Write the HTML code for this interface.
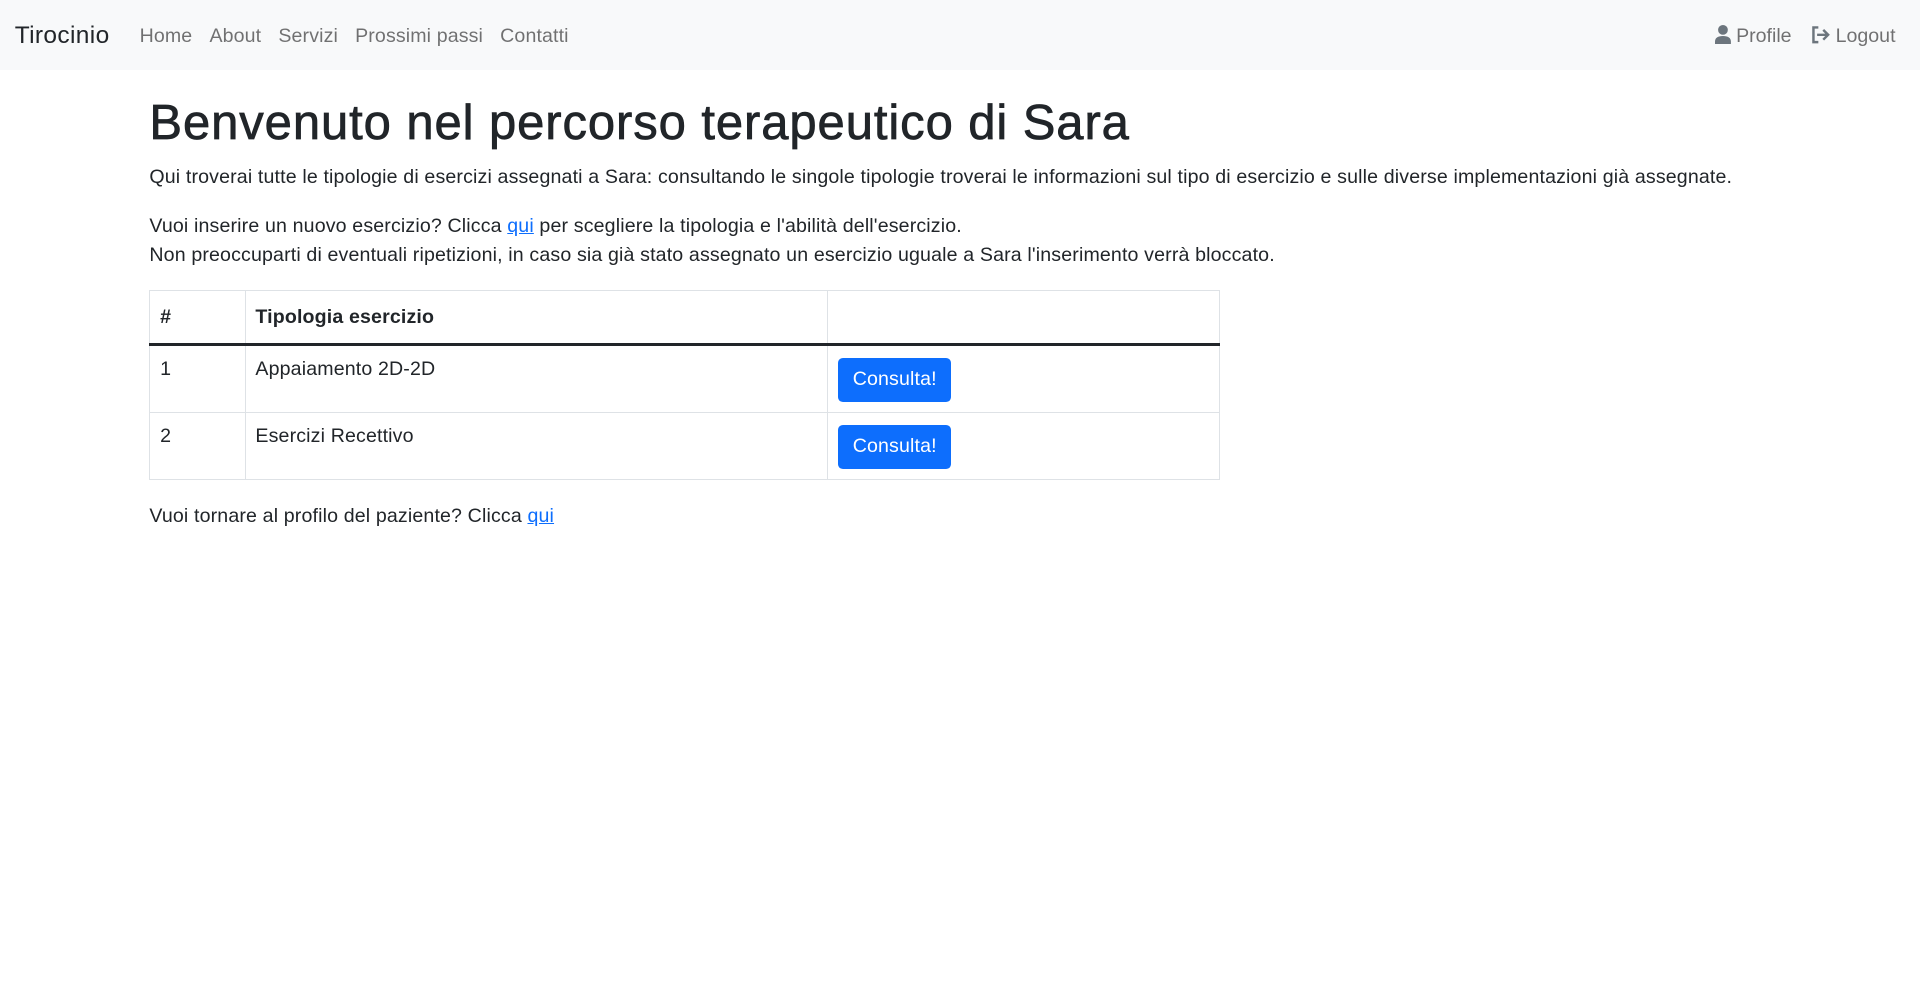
<!DOCTYPE html>
<html><head><meta charset="utf-8">
<style>
html{zoom:1.2245}
body{margin:0;font-family:"Liberation Sans",sans-serif;color:#212529;font-size:16px;line-height:1.5;background:#fff}
.nav{height:57px;background:#f8f9fa;position:relative}
.brand{position:absolute;left:12px;top:15px;font-size:20px;color:#212529;line-height:30px;letter-spacing:0.3px}
.links{position:absolute;left:114px;top:18px;color:rgba(0,0,0,.55);line-height:24px;letter-spacing:0.1px}
.links span{margin-right:14px}
.right{position:absolute;right:20px;top:18px;color:rgba(0,0,0,.55);line-height:24px;display:flex;gap:16px;align-items:center}
.right svg{vertical-align:-2px;margin-right:4px}
.main{padding-left:122px;letter-spacing:0.12px}
h1{font-size:40px;font-weight:normal;margin:0;padding-top:20px;padding-bottom:2px;line-height:48px;letter-spacing:0.75px;-webkit-text-stroke:0.6px #212529}
p{margin:6px 0 16px}
a{color:#0d6efd;text-decoration:underline}
table{border-collapse:collapse;width:874px;margin-top:5px}
td,th{border:1px solid #dee2e6;text-align:left;padding:8px 8px;vertical-align:top}
th{height:23px;padding-top:10px;border-bottom:3px solid #212529}
td{height:38px}
.btn{display:inline-block;background:#0d6efd;color:#fff;border-radius:4px;padding:6px 12px;margin-top:2px;font-size:16px;line-height:24px}
</style></head><body>
<div class="nav">
<div class="brand">Tirocinio</div>
<div class="links"><span>Home</span><span>About</span><span>Servizi</span><span>Prossimi passi</span><span>Contatti</span></div>
<div class="right">
<span><svg width="13" height="16" viewBox="0 0 13 16"><circle cx="6.5" cy="4" r="4" fill="#6c757d"/><path d="M0 16v-2.5C0 10.5 2.5 9 6.5 9S13 10.5 13 13.5V16z" fill="#6c757d"/></svg>Profile</span>
<span><svg width="16" height="16" viewBox="0 0 16 16" fill="none" stroke="#6c757d" stroke-width="2"><path d="M6 2H2v12h4"/><path d="M5 8h9M10 4l4 4-4 4"/></svg>Logout</span>
</div>
</div>
<div class="main">
<h1>Benvenuto nel percorso terapeutico di Sara</h1>
<p>Qui troverai tutte le tipologie di esercizi assegnati a Sara: consultando le singole tipologie troverai le informazioni sul tipo di esercizio e sulle diverse implementazioni già assegnate.</p>
<p>Vuoi inserire un nuovo esercizio? Clicca <a>qui</a> per scegliere la tipologia e l'abilità dell'esercizio.<br>Non preoccuparti di eventuali ripetizioni, in caso sia già stato assegnato un esercizio uguale a Sara l'inserimento verrà bloccato.</p>
<table>
<thead><tr><th style="width:61px">#</th><th style="width:459px">Tipologia esercizio</th><th></th></tr></thead>
<tbody>
<tr><td>1</td><td>Appaiamento 2D-2D</td><td><span class="btn">Consulta!</span></td></tr>
<tr><td>2</td><td>Esercizi Recettivo</td><td><span class="btn">Consulta!</span></td></tr>
</tbody></table>
<p style="margin-top:18px">Vuoi tornare al profilo del paziente? Clicca <a>qui</a></p>
</div>
</body></html>
